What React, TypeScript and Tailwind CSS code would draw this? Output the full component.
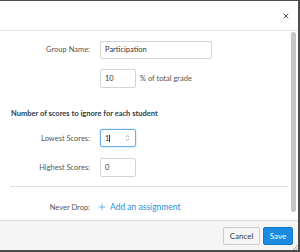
import { Plus, X } from "lucide-react";

const Label = ({ children }: { children: string }) => (
    <div className="w-[90px] shrink-0 text-right text-[7.5px] text-[#555]">{children}</div>
);

const App = () => {
    return (
        <div className="w-[300px] h-[252px] bg-white border-t border-r-2 border-b-2 border-[#4d4d4d] flex flex-col font-['Lato','Liberation_Sans',sans-serif] overflow-hidden">

            {/* Header */}
            <div className="h-[30px] shrink-0 border-b border-[#e3e3e3] flex items-center justify-end pr-[8px]">
                <X className="w-[8px] h-[8px] text-[#555]" strokeWidth={3} />
            </div>

            {/* Body */}
            <div className="flex flex-1 min-h-0">
                <div className="flex-1 flex flex-col pt-[10px]">
                    <div className="flex items-center gap-[10px] h-[18px]">
                        <Label>Group Name:</Label>
                        <div className="w-[112px] h-[18px] border border-[#d4d4d4] rounded-[2px] flex items-center px-[4px] text-[7.5px] text-[#333]">Participation</div>
                    </div>
                    <div className="flex items-center gap-[10px] h-[19px] mt-[10px]">
                        <div className="w-[90px] shrink-0" />
                        <div className="w-[36px] h-[19px] border border-[#d4d4d4] rounded-[2px] flex items-center px-[4px] text-[7.5px] text-[#333]">10</div>
                        <span className="-ml-[6px] text-[7.5px] text-[#555]">% of total grade</span>
                    </div>

                    <div className="mt-[20px] pl-[11px] text-[7.5px] font-bold text-[#2d3b45]">Number of scores to ignore for each student</div>

                    <div className="flex items-center gap-[10px] h-[18px] mt-[10px]">
                        <Label>Lowest Scores:</Label>
                        <div className="w-[36px] h-[18px] border border-[#69aee6] rounded-[2px] shadow-[0_0_2px_#9fcdf0] flex items-center justify-between px-[4px] text-[7.5px] text-[#333]">
                            <span>1<span className="inline-block w-px h-[7px] bg-[#333] align-middle" /></span>
                            <svg width="5" height="8" viewBox="0 0 5 8" className="mr-[1px]">
                                <path d="M1 3 L2.5 1.5 L4 3" fill="none" stroke="#999" strokeWidth="0.8" />
                                <path d="M1 5 L2.5 6.5 L4 5" fill="none" stroke="#999" strokeWidth="0.8" />
                            </svg>
                        </div>
                    </div>
                    <div className="flex items-center gap-[10px] h-[19px] mt-[11px]">
                        <Label>Highest Scores:</Label>
                        <div className="w-[36px] h-[19px] border border-[#d4d4d4] rounded-[2px] flex items-center px-[4px] text-[7.5px] text-[#333]">0</div>
                    </div>

                    <div className="mt-[9px] ml-[10px] mr-[3px] border-t border-[#e0e0e0]" />

                    <div className="flex items-center gap-[10px] mt-[13px] h-[14px]">
                        <Label>Never Drop:</Label>
                        <div className="flex items-center gap-[3px] text-[8.5px] text-[#1f8fe0]">
                            <Plus className="w-[10px] h-[10px] -ml-[3px]" strokeWidth={1.5} />
                            <span>Add an assignment</span>
                        </div>
                    </div>
                </div>

                {/* Scrollbar */}
                <div className="w-[7px] shrink-0 pt-[1px] pb-[8px] pr-[1px]">
                    <div className="w-[5px] h-full rounded-[3px] bg-[#c6c6c6]" />
                </div>
            </div>

            {/* Footer */}
            <div className="h-[30px] shrink-0 bg-[#f5f5f5] border-t border-[#dedede] flex items-center justify-end gap-[3px] pr-[5px] relative">
                <button className="h-[18px] w-[37px] bg-[#f5f5f5] border border-[#c7cdd1] rounded-[2px] text-[8px] text-[#2d3b45]">Cancel</button>
                <button className="h-[18px] w-[30px] bg-[#1a8be0] border border-[#0f7ccd] rounded-[2px] text-[8px] text-white">Save</button>
                <svg width="5" height="5" viewBox="0 0 5 5" className="absolute right-0 bottom-0">
                    <path d="M5 0 L0 5 M5 2.5 L2.5 5" stroke="#888" strokeWidth="0.7" />
                </svg>
            </div>
        </div>
    );
};

export default App;
